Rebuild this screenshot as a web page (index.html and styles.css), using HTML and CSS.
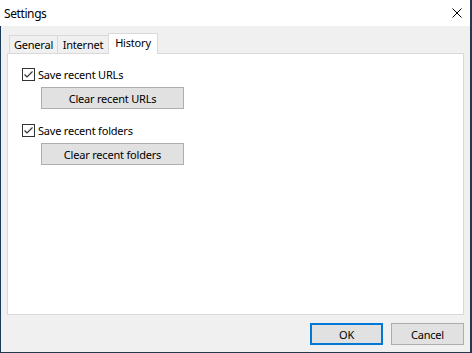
FILE: index.html
```html
<!DOCTYPE html>
<html lang="en">
<head>
    <meta charset="UTF-8">
    <title>Settings</title>
    <link rel="stylesheet" href="styles.css">
</head>
<body>
    <div class="window">
        <div class="titlebar">
            <span class="title">Settings</span>
            <svg class="close" width="10" height="10" viewBox="0 0 10 10">
                <path d="M0.5 0.5 L9.5 9.5 M9.5 0.5 L0.5 9.5" stroke="#000" stroke-width="1" fill="none"/>
            </svg>
        </div>

        <div class="dialog">
            <div class="tabs">
                <div class="tab tab-general">General</div>
                <div class="tab tab-internet">Internet</div>
                <div class="tab tab-history active">History</div>
            </div>

            <div class="panel">
                <label class="check">
                    <svg class="box" width="13" height="13" viewBox="0 0 13 13">
                        <rect x="0.5" y="0.5" width="12" height="12" fill="#fff" stroke="#333"/>
                        <polyline points="2.5,6.5 5,9 10.5,3.5" fill="none" stroke="#333" stroke-width="1.2"/>
                    </svg>
                    <span>Save recent URLs</span>
                </label>
                <button class="btn btn-clear">Clear recent URLs</button>

                <label class="check check-second">
                    <svg class="box" width="13" height="13" viewBox="0 0 13 13">
                        <rect x="0.5" y="0.5" width="12" height="12" fill="#fff" stroke="#333"/>
                        <polyline points="2.5,6.5 5,9 10.5,3.5" fill="none" stroke="#333" stroke-width="1.2"/>
                    </svg>
                    <span>Save recent folders</span>
                </label>
                <button class="btn btn-clear">Clear recent folders</button>
            </div>

            <div class="footer">
                <button class="btn btn-ok">OK</button>
                <button class="btn">Cancel</button>
            </div>
        </div>
    </div>
</body>
</html>
```

FILE: styles.css
```css
body {
    margin: 0;
    padding: 0;
    background-color: #223950;
    font-family: "Noto Sans", "Open Sans", sans-serif;
    font-size: 11px;
    letter-spacing: -0.2px;
    color: #000;
}
.window {
    width: 470px;
    height: 352px;
    display: flex;
    flex-direction: column;
    background: #f0f0f0;
}
.titlebar {
    height: 26px;
    flex-shrink: 0;
    background: #fff;
    display: flex;
    align-items: center;
    justify-content: space-between;
    padding: 0 8px 0 4px;
}
.title {
    font-size: 12px;
    letter-spacing: -0.4px;
    padding-top: 1px;
}
.close {
    display: block;
}
.dialog {
    flex: 1;
    display: flex;
    flex-direction: column;
    border-left: 1px solid #1b3a5c;
    padding: 7px 6px 7px 6px;
}

/* tab strip */
.tabs {
    display: flex;
    align-items: flex-end;
    height: 20px;
    padding-left: 2px;
    flex-shrink: 0;
}
.tab {
    box-sizing: border-box;
    height: 18px;
    border: 1px solid #d9d9d9;
    border-bottom: none;
    display: flex;
    align-items: center;
    justify-content: center;
    padding-bottom: 1px;
}
.tab + .tab {
    margin-left: -1px;
}
.tab-general { width: 49px; }
.tab-internet { width: 52px; }
.tab-history { width: 50px; }
.tab.active {
    height: 21px;
    margin-bottom: -1px;
    background: #fff;
    position: relative;
    z-index: 1;
    padding-bottom: 3px;
}
.panel {
    flex: 1;
    background: #fff;
    border: 1px solid #d9d9d9;
    padding: 13px 14px;
    display: flex;
    flex-direction: column;
    align-items: flex-start;
}
.check {
    display: flex;
    align-items: center;
    height: 14px;
}
.check .box {
    display: block;
    margin-right: 3px;
}
.check-second {
    margin-top: 14px;
}

/* buttons */
.btn {
    box-sizing: border-box;
    height: 22px;
    width: 73px;
    background: #e1e1e1;
    border: 1px solid #adadad;
    font-family: inherit;
    font-size: 11px;
    letter-spacing: -0.2px;
    color: #000;
    padding: 0;
    margin: 0;
}
.btn-clear {
    width: 143px;
    margin: 6px 0 0 19px;
}
.btn-ok {
    border: 2px solid #0078d7;
}
.footer {
    display: flex;
    justify-content: flex-end;
    gap: 8px;
    margin-top: 8px;
    flex-shrink: 0;
}
```
